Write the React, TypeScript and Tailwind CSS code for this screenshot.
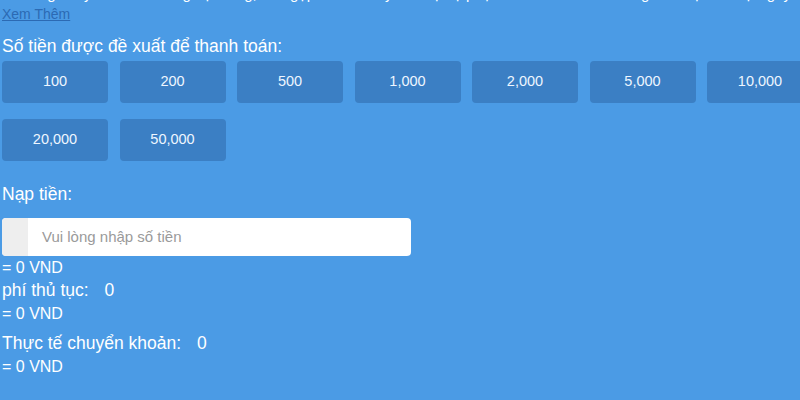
import React from "react";

const amounts = ["100", "200", "500", "1,000", "2,000", "5,000", "10,000", "20,000", "50,000"];

export default function App() {
  return (
    <div className="w-[800px] h-[400px] overflow-hidden bg-[#4b9be5] text-white pl-[2px] font-['Liberation_Sans',Arial,sans-serif]">
      <div className="h-[4px] overflow-hidden">
        <div className="-mt-[16px] text-[15px] leading-[20px] whitespace-nowrap">
          Vui lòng chuyển khoản đúng nội dung, nếu gặp vấn đề hãy liên hệ bộ phận chăm sóc khách hàng để được hỗ trợ ngay
        </div>
      </div>
      <div className="text-[14px] leading-[20px]">
        <a className="text-[#2c6ab3] underline">Xem Thêm</a>
      </div>
      <div className="mt-[10px] text-[17.5px] leading-[24px]">Số tiền được đề xuất để thanh toán:</div>
      <div className="mt-[3px] w-[830px] flex flex-wrap gap-x-[11.5px] gap-y-[16px]">
        {amounts.map((a) => (
          <div
            key={a}
            className="w-[106px] h-[42px] rounded-[4px] bg-[#3b7fc4] flex items-center justify-center text-[14.5px] text-[#eef6ff]"
          >
            {a}
          </div>
        ))}
      </div>
      <div className="mt-[21px] text-[17.5px] leading-[24px]">Nạp tiền:</div>
      <div className="mt-[12px] w-[409px] h-[38px] rounded-[4px] bg-white flex overflow-hidden">
        <div className="w-[26px] h-full bg-[#eeeeee]" />
        <div className="flex items-center pl-[14px] text-[15px] text-[#9a9a9a]">Vui lòng nhập số tiền</div>
      </div>
      <div className="text-[16px] leading-[23px]">
        <div>= 0 VND</div>
        <div className="text-[17.5px]">
          phí thủ tục:<span className="ml-[16px]">0</span>
        </div>
        <div>= 0 VND</div>
        <div className="mt-[7px] text-[17.5px]">
          Thực tế chuyển khoản:<span className="ml-[16px]">0</span>
        </div>
        <div>= 0 VND</div>
      </div>
    </div>
  );
}
